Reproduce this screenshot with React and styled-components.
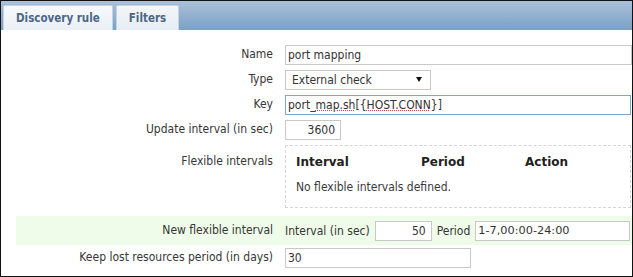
import styled, { createGlobalStyle } from "styled-components";

const GlobalStyle = createGlobalStyle`
  body {
    margin: 0;
    background: #fff;
    font-family: "DejaVu Sans Condensed", "DejaVu Sans", sans-serif;
  }
`;

const Frame = styled.div`
  width: 633px;
  height: 277px;
  box-sizing: border-box;
  border: 1px solid #111;
  overflow: hidden;
  background: #fff;
  color: #363636;
  font-size: 12px;
`;

const TabBar = styled.div`
  height: 29px;
  box-sizing: border-box;
  padding: 4px 0 0 2px;
  display: flex;
  align-items: flex-end;
  gap: 3px;
  background: linear-gradient(#aac1d9, #7aa1c5);
`;

const Tab = styled.div`
  height: 25px;
  box-sizing: border-box;
  padding: 0 12px;
  display: flex;
  align-items: center;
  border: 1px solid #c4d3e3;
  border-bottom: none;
  border-radius: 2px 2px 0 0;
  background: ${(p) =>
    p.$active
      ? "linear-gradient(#f7f9fc, #eaf0f6)"
      : "linear-gradient(#f3f6fa, #e6edf5)"};
  color: #4c6785;
  font-weight: bold;
  font-size: 11.5px;
`;

const Form = styled.div`
  padding-top: 12px;
`;

const Row = styled.div`
  display: grid;
  grid-template-columns: 257px 1fr;
  column-gap: 12px;
  margin-left: 15px;
  min-height: ${(p) => p.$h || 25}px;
  box-sizing: border-box;
  padding: ${(p) => p.$pad || "0"};
  align-items: ${(p) => (p.$top ? "start" : "center")};
  background: ${(p) => (p.$highlight ? "#effcea" : "transparent")};
`;

const Label = styled.div`
  text-align: right;
  line-height: 15px;
  padding-top: ${(p) => p.$offset || 0}px;
`;

const TextBox = styled.div`
  width: ${(p) => p.$w}px;
  height: 20px;
  box-sizing: border-box;
  border: 1px solid ${(p) => (p.$focus ? "#7fa7d6" : "#c8c8c8")};
  background: #fff;
  color: #333;
  padding: 0 ${(p) => (p.$right ? "5px" : "3px")} 0 ${(p) => (p.$right ? "3px" : "2px")};
  display: flex;
  align-items: center;
  justify-content: ${(p) => (p.$right ? "flex-end" : "flex-start")};
  white-space: nowrap;
  overflow: hidden;
  font-family: ${(p) =>
    p.$wide ? '"DejaVu Sans", sans-serif' : "inherit"};
  font-size: ${(p) => (p.$wide ? "11.3px" : "12px")};
`;

const Misspelled = styled.span`
  text-decoration: underline dotted #e04040;
  text-decoration-thickness: 1px;
  text-underline-offset: 1px;
`;

const Select = styled.div`
  width: 146px;
  height: 20px;
  box-sizing: border-box;
  border: 1px solid #c8c8c8;
  background: #fff;
  color: #333;
  padding: 0 6px;
  display: flex;
  align-items: center;
  justify-content: space-between;
`;

const Caret = styled.span`
  width: 0;
  height: 0;
  border-left: 3px solid transparent;
  border-right: 3px solid transparent;
  border-top: 5px solid #111;
  margin-right: 2px;
`;

const IntervalBox = styled.div`
  width: 346px;
  box-sizing: border-box;
  border: 1px dashed #d6d6d6;
  padding: 8px 10px 12px;
  display: grid;
  grid-template-columns: 125px 104px 1fr;
  row-gap: 9px;
  line-height: 16px;
`;

const HeadCell = styled.div`
  font-family: "DejaVu Sans", sans-serif;
  font-weight: bold;
  color: #222;
  font-size: 12px;
`;

const EmptyNote = styled.div`
  grid-column: 1 / -1;
  color: #3a3a3a;
`;

const Inline = styled.div`
  display: flex;
  align-items: center;
  gap: 5px;
`;

export default function App() {
  return (
    <>
      <GlobalStyle />
      <Frame>
        <TabBar>
          <Tab $active>Discovery rule</Tab>
          <Tab>Filters</Tab>
        </TabBar>
        <Form>
          <Row>
            <Label>Name</Label>
            <TextBox $w={347}>port mapping</TextBox>
          </Row>
          <Row>
            <Label>Type</Label>
            <Select>
              External check
              <Caret />
            </Select>
          </Row>
          <Row>
            <Label>Key</Label>
            <TextBox $w={346} $focus>
              port_<Misspelled>map.sh</Misspelled>[{"{"}
              <Misspelled>HOST.CONN</Misspelled>
              {"}"}]
            </TextBox>
          </Row>
          <Row>
            <Label>Update interval (in sec)</Label>
            <TextBox $w={56} $right>
              3600
            </TextBox>
          </Row>
          <Row $top $pad="3px 0 8px">
            <Label $offset={9}>Flexible intervals</Label>
            <IntervalBox>
              <HeadCell>Interval</HeadCell>
              <HeadCell>Period</HeadCell>
              <HeadCell>Action</HeadCell>
              <EmptyNote>No flexible intervals defined.</EmptyNote>
            </IntervalBox>
          </Row>
          <Row $highlight $h={29}>
            <Label>New flexible interval</Label>
            <Inline>
              Interval (in sec)
              <TextBox $w={57} $right>
                50
              </TextBox>
              Period
              <TextBox $w={155} $wide>
                1-7,00:00-24:00
              </TextBox>
            </Inline>
          </Row>
          <Row>
            <Label>Keep lost resources period (in days)</Label>
            <TextBox $w={186}>30</TextBox>
          </Row>
        </Form>
      </Frame>
    </>
  );
}
